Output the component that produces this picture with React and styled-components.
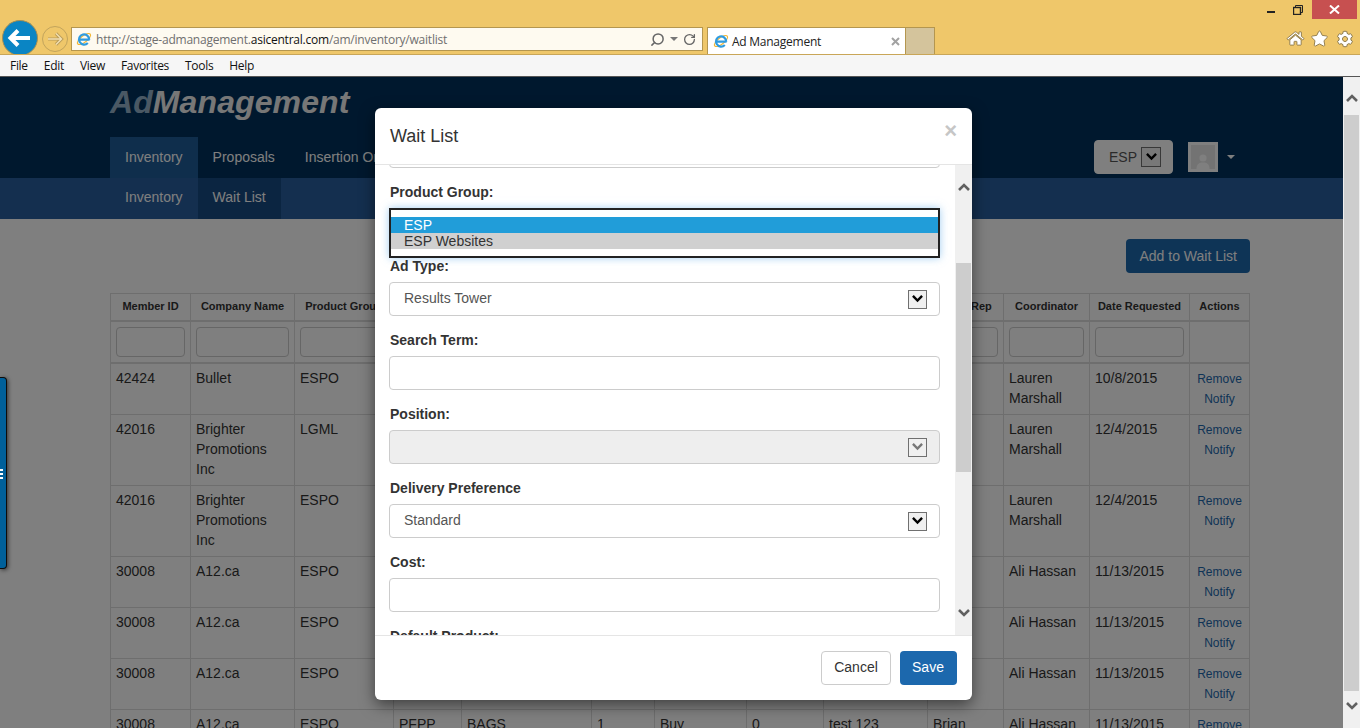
import React from 'react';
import styled, { createGlobalStyle } from 'styled-components';
import { FaHome, FaStar, FaCog } from 'react-icons/fa';
import { Search, RotateCw } from 'lucide-react';

const GlobalStyle = createGlobalStyle`
  html, body {
    margin: 0;
    padding: 0;
    overflow: hidden;
  }
  * {
    box-sizing: border-box;
  }
  body {
    font-family: 'Liberation Sans', Arial, sans-serif;
    font-size: 14px;
    color: #333;
  }
`;

const Screen = styled.div`
  width: 1360px;
  height: 728px;
  display: flex;
  flex-direction: column;
  overflow: hidden;
  background: #fff;
`;

/* ---- browser chrome ---- */

const TitleBar = styled.div`
  height: 55px;
  background: #efc76a;
  border-bottom: 1px solid #c9a658;
  font-family: 'Open Sans', sans-serif;
`;

const WindowControls = styled.div`
  height: 19px;
  display: flex;
  justify-content: flex-end;
  padding-right: 3px;
`;

const WindowButton = styled.div`
  width: ${(p) => p.$width}px;
  padding-top: ${(p) => p.$pt || 0}px;
  display: flex;
  align-items: center;
  justify-content: center;
  background: ${(p) => p.$bg || 'transparent'};
`;

const ToolRow = styled.div`
  height: 35px;
  display: flex;
  align-items: flex-start;
  overflow: hidden;
`;

const BackButton = styled.div`
  width: 36px;
  height: 36px;
  margin: 1px 0 0 2px;
  flex: none;
  border-radius: 50%;
  background: #0a85c4;
  border: 1px solid #a78f52;
`;

const ForwardButton = styled.div`
  width: 26px;
  height: 26px;
  margin: 7px 0 0 4px;
  flex: none;
  border-radius: 50%;
  border: 1px solid #c2a45c;
  display: flex;
  align-items: center;
  justify-content: center;
`;

const AddressBar = styled.div`
  width: 632px;
  height: 24px;
  margin: 8px 0 0 3px;
  flex: none;
  display: flex;
  align-items: center;
  gap: 5px;
  padding: 0 6px 0 4px;
  background: #fefaf0;
  border: 1px solid #b4964f;
  font-size: 12px;
`;

const Url = styled.span`
  flex: 1;
  margin-left: -1px;
  color: #6f6f6f;
  white-space: nowrap;
  letter-spacing: -0.23px;
  strong {
    font-weight: 400;
    color: #111;
  }
`;

const Caret = styled.span`
  width: 0;
  height: 0;
  border-left: 4px solid transparent;
  border-right: 4px solid transparent;
  border-top: 4px solid #777;
`;

const BrowserTab = styled.div`
  width: 199px;
  height: 27px;
  margin: 8px 0 0 4px;
  flex: none;
  display: flex;
  align-items: center;
  gap: 3px;
  padding: 0 5px;
  background: #fff;
  border: 1px solid #b4964f;
  border-bottom: 0;
  font-size: 12px;
  color: #222;
`;

const TabTitle = styled.span`
  flex: 1;
  letter-spacing: -0.25px;
`;

const NewTab = styled.div`
  width: 29px;
  height: 27px;
  margin-top: 8px;
  flex: none;
  background: #d4c49c;
  border: 1px solid #b4964f;
  border-left: 0;
  border-bottom: 0;
`;

const ToolIcons = styled.div`
  margin-left: auto;
  padding: 11px 7px 0 0;
  display: flex;
  gap: 9px;
  align-items: center;
  svg {
    stroke: #8d7a4b;
    stroke-width: 32px;
    color: #fff;
    overflow: visible;
  }
  svg:first-child {
    margin-right: -2px;
  }
`;

const MenuBar = styled.div`
  height: 22px;
  flex: none;
  display: flex;
  align-items: center;
  gap: 16px;
  padding: 0 0 1px 10px;
  background: #f6f6f6;
  border-bottom: 1px solid #555;
  font-family: 'Open Sans', sans-serif;
  font-size: 12px;
  letter-spacing: -0.3px;
  color: #111;
`;

const MenuItem = styled.span``;

/* ---- page ---- */

const Viewport = styled.div`
  flex: 1;
  display: flex;
  min-height: 0;
`;

const Page = styled.div`
  position: relative;
  width: 1343px;
  overflow: hidden;
`;

const Backdrop = styled.div`
  position: absolute;
  inset: 0;
  background: rgba(0, 0, 0, 0.5);
`;

const Header = styled.header`
  background: #00305c;
  padding: 0 110px;
  height: 101px;
`;

const Logo = styled.div`
  height: 60px;
  padding-top: 6px;
  font-size: 32px;
  line-height: 38px;
  font-weight: 700;
  font-style: italic;
  letter-spacing: 0.1px;
  color: #eee;
  span {
    color: #94b0c8;
  }
`;

const NavRow = styled.nav`
  height: 41px;
  display: flex;
  align-items: stretch;
`;

const NavTab = styled.div`
  padding: 0 15px 2px;
  display: flex;
  align-items: center;
  color: #fff;
  white-space: nowrap;
  background: ${(p) => (p.$active ? '#1e5c98' : 'transparent')};
`;

const HeaderTools = styled.div`
  margin-left: auto;
  display: flex;
  align-items: flex-start;
  margin-right: -2px;
`;

const ProductSelect = styled.div`
  width: 79px;
  height: 34px;
  margin: 3px 15px 0 0;
  display: flex;
  align-items: center;
  gap: 4px;
  padding-left: 14px;
  background: #fff;
  border: 1px solid #fff;
  border-radius: 4px;
  color: #555;
`;

const Avatar = styled.div`
  width: 30px;
  height: 30px;
  margin-top: 5px;
  border: 3px solid #fff;
  background: #e6e6e6;
  display: flex;
  align-items: flex-end;
  justify-content: center;
`;

const AvatarCaret = styled.span`
  margin: 18px 0 0 9px;
  width: 0;
  height: 0;
  border-left: 4.5px solid transparent;
  border-right: 4.5px solid transparent;
  border-top: 4.5px solid #fff;
`;

const SubNav = styled.div`
  height: 41px;
  display: flex;
  align-items: stretch;
  padding: 0 110px;
  background: #285e9e;
`;

const SubTab = styled.div`
  padding: 0 15px 4px;
  display: flex;
  align-items: center;
  color: #fff;
  background: ${(p) => (p.$active ? '#174a82' : 'transparent')};
`;

const Content = styled.main`
  padding: 20px 93px 0 110px;
`;

const ActionRow = styled.div`
  display: flex;
  justify-content: flex-end;
  margin-bottom: 20px;
`;

const PrimaryButton = styled.button`
  height: 34px;
  padding: 0 13px;
  background: #1c68ad;
  color: #fff;
  border: 0;
  border-radius: 4px;
  font: 14px 'Liberation Sans', Arial, sans-serif;
`;

const SaveButton = styled(PrimaryButton)`
  width: 57px;
  padding: 0 1px 2px 0;
`;

const Table = styled.table`
  width: 1139px;
  table-layout: fixed;
  border-collapse: collapse;
  border: 1px solid #ddd;
`;

const Th = styled.th`
  height: 27px;
  padding: 0 3px 2px;
  font-size: 11px;
  font-weight: 700;
  text-align: center;
  white-space: nowrap;
  overflow: hidden;
  border: 1px solid #ddd;
  border-bottom: 2px solid #ddd;
  color: #333;
`;

const FilterCell = styled.td`
  height: 42px;
  padding: 0 5px;
  border: 1px solid #ddd;
  border-bottom: 2px solid #ddd;
  vertical-align: middle;
`;

const FilterInput = styled.input`
  display: block;
  width: 100%;
  height: 30px;
  background: #fff;
  border: 1px solid #ccc;
  border-radius: 4px;
`;

const Td = styled.td`
  padding: 4px 5px 6px;
  line-height: 20px;
  vertical-align: top;
  border: 1px solid #ddd;
  color: #333;
`;

const ActionCell = styled(Td)`
  padding: 5px;
  font-size: 12px;
  text-align: center;
`;

const ActionLink = styled.a`
  display: block;
  color: #1c68ad;
`;

/* ---- side tab ---- */

const SideTab = styled.div`
  position: absolute;
  left: 0;
  top: 300px;
  width: 7px;
  height: 192px;
  display: flex;
  align-items: center;
  background: #00609a;
  border: 1px solid #0c0c0c;
  border-left: 0;
  border-radius: 0 4px 4px 0;
  box-shadow: 1px 1px 4px rgba(0, 0, 0, 0.6);
`;

const SideDots = styled.div`
  display: flex;
  flex-direction: column;
  gap: 2px;
  margin-top: 1px;
  i {
    display: block;
    width: 3px;
    height: 2px;
    background: #fff;
  }
`;

/* ---- modal ---- */

const Modal = styled.div`
  position: absolute;
  left: 375px;
  top: 31px;
  width: 597px;
  height: 592px;
  display: flex;
  flex-direction: column;
  background: #fff;
  border-radius: 6px;
  box-shadow: 0 5px 15px rgba(0, 0, 0, 0.5);
`;

const ModalHeader = styled.div`
  height: 57px;
  flex: none;
  display: flex;
  align-items: center;
  justify-content: space-between;
  padding: 0 15px;
  border-bottom: 1px solid #e5e5e5;
`;

const ModalTitle = styled.h4`
  margin: 0;
  font-size: 18px;
  font-weight: 400;
  color: #333;
`;

const CloseMark = styled.span`
  margin-top: -11px;
  font-size: 22px;
  font-weight: 700;
  line-height: 1;
  color: #c6c6c6;
`;

const ModalBody = styled.div`
  flex: 1;
  min-height: 0;
  display: flex;
  overflow: hidden;
`;

const FormPane = styled.div`
  flex: 1;
  overflow: hidden;
  padding: 0 15px 0 14px;
`;

const FormStack = styled.form`
  margin-top: -31px;
`;

const Field = styled.div`
  margin-bottom: ${(p) => (p.$mb !== undefined ? p.$mb : 15)}px;
`;

const Label = styled.label`
  display: block;
  height: 20px;
  line-height: 18px;
  margin: 0 0 5px 1px;
  font-weight: 700;
  color: #333;
`;

const TextInput = styled.input`
  display: block;
  width: 100%;
  height: 34px;
  background: #fff;
  border: 1px solid #ccc;
  border-radius: 4px;
`;

const SelectBox = styled.div`
  height: 34px;
  display: flex;
  align-items: center;
  justify-content: space-between;
  padding: 0 12px 0 14px;
  background: ${(p) => (p.$disabled ? '#eee' : '#fff')};
  border: 1px solid #ccc;
  border-radius: 4px;
  color: #555;
`;

const SelectText = styled.span`
  margin-top: -2px;
`;

const DropArrow = styled.span`
  width: ${(p) => p.$size || 19}px;
  height: ${(p) => p.$size || 19}px;
  flex: none;
  display: flex;
  align-items: center;
  justify-content: center;
  background: #f0f0f0;
  border: 1px solid #707070;
  color: ${(p) => (p.$disabled ? '#777' : '#000')};
`;

const ListBox = styled.div`
  height: 50px;
  padding: 7px 0;
  background: #fff;
  border: 2px solid #222;
  box-shadow: 0 0 8px rgba(102, 175, 233, 0.6);
`;

const ListOption = styled.div`
  height: 16px;
  line-height: 16px;
  padding-left: 13px;
  background: ${(p) => (p.$selected ? '#219dd9' : '#d0d0d0')};
  color: ${(p) => (p.$selected ? '#fff' : '#333')};
`;

const ModalFooter = styled.div`
  height: 65px;
  flex: none;
  display: flex;
  justify-content: flex-end;
  gap: 9px;
  padding: 15px;
  border-top: 1px solid #e5e5e5;
`;

const CancelButton = styled.button`
  width: 70px;
  height: 34px;
  padding: 0 0 2px;
  background: #fff;
  color: #333;
  border: 1px solid #ccc;
  border-radius: 4px;
  font: 14px 'Liberation Sans', Arial, sans-serif;
`;

/* ---- scrollbars ---- */

const ScrollTrack = styled.div`
  width: 17px;
  flex: none;
  display: flex;
  flex-direction: column;
  align-items: center;
  background: #f0f0f0;
  color: #606060;
`;

const ScrollArrow = styled.div`
  height: ${(p) => p.$h}px;
  padding: ${(p) => p.$pt || 0}px 0 ${(p) => p.$pb || 0}px;
  flex: none;
  display: flex;
  align-items: center;
  justify-content: center;
`;

const ScrollThumb = styled.div`
  width: 15px;
  height: ${(p) => p.$h}px;
  margin-top: ${(p) => p.$top || 0}px;
  flex: none;
  background: #cdcdcd;
`;

const Spacer = styled.div`
  flex: 1;
`;

/* ---- drawings ---- */

const IeLogo = () => (
  <svg width="16" height="16" viewBox="0 0 16 16" style={{ flex: 'none' }}>
    <ellipse cx="8" cy="8" rx="8" ry="3.2" transform="rotate(-38 8 8)" fill="none" stroke="#f2b632" strokeWidth="1.1" />
    <path d="M13.6 8.7 H4 M13.2 8.7 A5.1 5.1 0 1 0 11.8 12" fill="none" stroke="#2f9be0" strokeWidth="2.2" />
  </svg>
);

const Chevron = ({ up, size = 12 }) => (
  <svg width={size} height={size * 0.67} viewBox="0 0 12 8">
    <path d={up ? 'M1 7 L6 2 L11 7' : 'M1 1 L6 6 L11 1'} fill="none" stroke="currentColor" strokeWidth="2.6" />
  </svg>
);

const SelectArrow = ({ disabled, size }) => (
  <DropArrow $disabled={disabled} $size={size}>
    <Chevron size={11} />
  </DropArrow>
);

const columns = [80, 104, 99, 68, 130, 63, 92, 77, 104, 76, 86, 100, 60];

const rows = [
  { id: '42424', company: 'Bullet', group: 'ESPO', coord: 'Lauren Marshall', date: '10/8/2015' },
  { id: '42016', company: 'Brighter Promotions Inc', group: 'LGML', coord: 'Lauren Marshall', date: '12/4/2015' },
  { id: '42016', company: 'Brighter Promotions Inc', group: 'ESPO', coord: 'Lauren Marshall', date: '12/4/2015' },
  { id: '30008', company: 'A12.ca', group: 'ESPO', coord: 'Ali Hassan', date: '11/13/2015' },
  { id: '30008', company: 'A12.ca', group: 'ESPO', coord: 'Ali Hassan', date: '11/13/2015' },
  { id: '30008', company: 'A12.ca', group: 'ESPO', coord: 'Ali Hassan', date: '11/13/2015' },
  {
    id: '30008', company: 'A12.ca', group: 'ESPO', coord: 'Ali Hassan', date: '11/13/2015',
    middle: ['PFPP', 'BAGS', '1', 'Buy', '0', 'test 123', 'Brian'],
  },
];

const headers = ['Member ID', 'Company Name', 'Product Group', '', '', '', '', '', '', 'Sales Rep', 'Coordinator', 'Date Requested', 'Actions'];

const DataTable = () => (
  <Table>
    <colgroup>
      {columns.map((w, i) => <col key={i} width={w} />)}
    </colgroup>
    <thead>
      <tr>
        {headers.map((h, i) => <Th key={i}>{h}</Th>)}
      </tr>
      <tr>
        {headers.map((h, i) => (
          <FilterCell key={i}>{i < 12 && <FilterInput />}</FilterCell>
        ))}
      </tr>
    </thead>
    <tbody>
      {rows.map((r, i) => (
        <tr key={i}>
          <Td>{r.id}</Td>
          <Td>{r.company}</Td>
          <Td>{r.group}</Td>
          {(r.middle || ['', '', '', '', '', '', '']).map((m, j) => <Td key={j}>{m}</Td>)}
          <Td>{r.coord}</Td>
          <Td>{r.date}</Td>
          <ActionCell>
            <ActionLink>Remove</ActionLink>
            <ActionLink>Notify</ActionLink>
          </ActionCell>
        </tr>
      ))}
    </tbody>
  </Table>
);

const App = () => (
  <Screen>
    <GlobalStyle />
    <TitleBar>
      <WindowControls>
        <WindowButton $width={26} $pt={5}>
          <svg width="8" height="2"><rect width="8" height="2" fill="#222" /></svg>
        </WindowButton>
        <WindowButton $width={28}>
          <svg width="10" height="10" viewBox="0 0 10 10" fill="none" stroke="#222">
            <path d="M2.5 2 V0.5 H9.5 V7.5 H8" />
            <rect x="0.5" y="2.5" width="7" height="7" strokeWidth="1.4" />
          </svg>
        </WindowButton>
        <WindowButton $width={45} $bg="#c75050">
          <svg width="11" height="9" viewBox="0 0 11 9">
            <path d="M1 0.5 L10 8.5 M10 0.5 L1 8.5" stroke="#fff" strokeWidth="2" />
          </svg>
        </WindowButton>
      </WindowControls>
      <ToolRow>
        <BackButton>
          <svg width="34" height="34" viewBox="1 1 34 34">
            <path d="M28 18 H9 M16 10.5 L8.5 18 L16 25.5" fill="none" stroke="#fff" strokeWidth="4" />
          </svg>
        </BackButton>
        <ForwardButton>
          <svg width="18" height="16" viewBox="0 0 18 16">
            <path d="M2 8 H15 M10 2.5 L15.5 8 L10 13.5" fill="none" stroke="#b99c58" strokeWidth="3.2" />
            <path d="M2 8 H15 M10 2.5 L15.5 8 L10 13.5" fill="none" stroke="#f3e0b2" strokeWidth="1.4" />
          </svg>
        </ForwardButton>
        <AddressBar>
          <IeLogo />
          <Url>http://stage-admanagement.<strong>asicentral.com</strong>/am/inventory/waitlist</Url>
          <Search size={15} color="#666" strokeWidth={2.4} style={{ transform: 'scaleX(-1)' }} />
          <Caret />
          <RotateCw size={13} color="#666" strokeWidth={2.4} />
        </AddressBar>
        <BrowserTab>
          <IeLogo />
          <TabTitle>Ad Management</TabTitle>
          <svg width="9" height="9" viewBox="0 0 9 9">
            <path d="M1 1 L8 8 M8 1 L1 8" stroke="#a2a2a2" strokeWidth="2" />
          </svg>
        </BrowserTab>
        <NewTab />
        <ToolIcons>
          <FaHome size={17} />
          <FaStar size={17} />
          <FaCog size={16} />
        </ToolIcons>
      </ToolRow>
    </TitleBar>
    <MenuBar>
      {['File', 'Edit', 'View', 'Favorites', 'Tools', 'Help'].map((m) => <MenuItem key={m}>{m}</MenuItem>)}
    </MenuBar>
    <Viewport>
      <Page>
        <Header>
          <Logo><span>Ad</span>Management</Logo>
          <NavRow>
            <NavTab $active>Inventory</NavTab>
            <NavTab>Proposals</NavTab>
            <NavTab>Insertion Orders</NavTab>
            <HeaderTools>
              <ProductSelect>ESP<SelectArrow size={20} /></ProductSelect>
              <Avatar>
                <svg width="18" height="19" viewBox="0 0 18 19">
                  <circle cx="9" cy="8" r="3.6" fill="#fff" />
                  <path d="M2.5 19 C2.5 14 5 12.5 9 12.5 C13 12.5 15.5 14 15.5 19 Z" fill="#fff" />
                </svg>
              </Avatar>
              <AvatarCaret />
            </HeaderTools>
          </NavRow>
        </Header>
        <SubNav>
          <SubTab>Inventory</SubTab>
          <SubTab $active>Wait List</SubTab>
        </SubNav>
        <Content>
          <ActionRow>
            <PrimaryButton>Add to Wait List</PrimaryButton>
          </ActionRow>
          <DataTable />
        </Content>
        <Backdrop />
        <SideTab>
          <SideDots><i /><i /><i /></SideDots>
        </SideTab>
        <Modal>
          <ModalHeader>
            <ModalTitle>Wait List</ModalTitle>
            <CloseMark>×</CloseMark>
          </ModalHeader>
          <ModalBody>
            <FormPane>
              <FormStack>
                <Field><TextInput /></Field>
                <Field $mb={-1}>
                  <Label>Product Group:</Label>
                  <ListBox>
                    <ListOption $selected>ESP</ListOption>
                    <ListOption>ESP Websites</ListOption>
                  </ListBox>
                </Field>
                <Field>
                  <Label>Ad Type:</Label>
                  <SelectBox><SelectText>Results Tower</SelectText><SelectArrow /></SelectBox>
                </Field>
                <Field>
                  <Label>Search Term:</Label>
                  <TextInput />
                </Field>
                <Field>
                  <Label>Position:</Label>
                  <SelectBox $disabled><span /><SelectArrow disabled /></SelectBox>
                </Field>
                <Field>
                  <Label>Delivery Preference</Label>
                  <SelectBox><SelectText>Standard</SelectText><SelectArrow /></SelectBox>
                </Field>
                <Field>
                  <Label>Cost:</Label>
                  <TextInput />
                </Field>
                <Field>
                  <Label>Default Product:</Label>
                </Field>
              </FormStack>
            </FormPane>
            <ScrollTrack>
              <ScrollArrow $h={44}><Chevron up /></ScrollArrow>
              <ScrollThumb $h={209} $top={54} />
              <Spacer />
              <ScrollArrow $h={44} $pt={1}><Chevron /></ScrollArrow>
            </ScrollTrack>
          </ModalBody>
          <ModalFooter>
            <CancelButton>Cancel</CancelButton>
            <SaveButton>Save</SaveButton>
          </ModalFooter>
        </Modal>
      </Page>
      <ScrollTrack>
        <ScrollArrow $h={38} $pt={4}><Chevron up /></ScrollArrow>
        <ScrollThumb $h={576} />
        <Spacer />
        <ScrollArrow $h={37} $pb={7}><Chevron /></ScrollArrow>
      </ScrollTrack>
    </Viewport>
  </Screen>
);

export default App;
